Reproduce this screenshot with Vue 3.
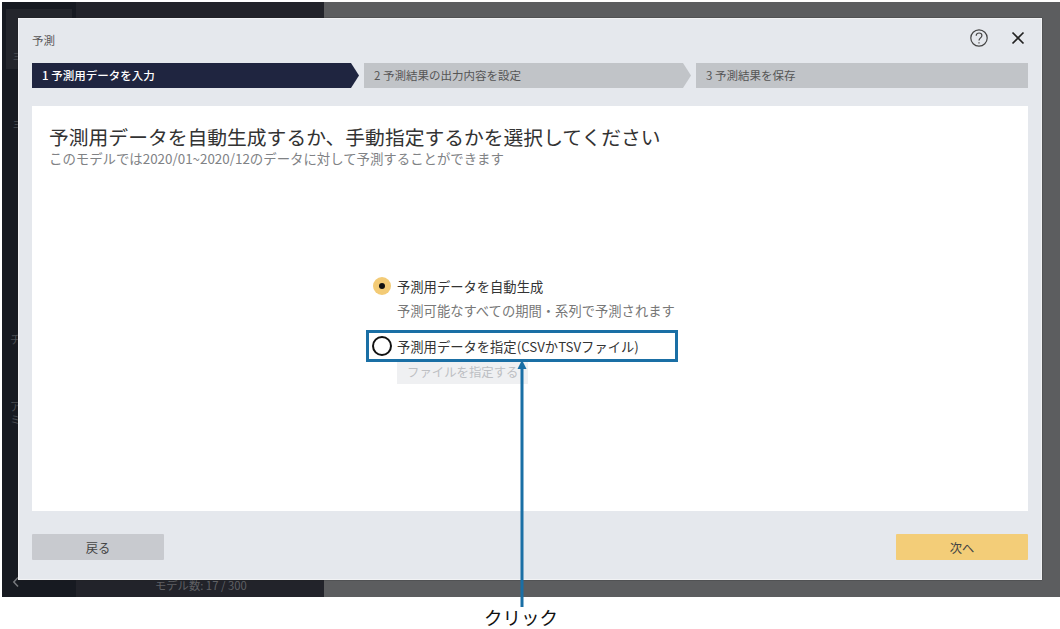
<script setup>
const steps = [
  { label: '1 予測用データを入力', cls: 'active' },
  { label: '2 予測結果の出力内容を設定', cls: 'idle' },
  { label: '3 予測結果を保存', cls: 'last' }
]
</script>

<template>
  <div class="page">
    <div class="shot">
      <aside class="side">
        <div class="side-tile"></div>
        <span class="side-m1">三</span>
        <span class="side-m2">三</span>
        <span class="side-a">チ</span>
        <span class="side-b">ア<br />ミ</span>
        <svg class="side-back" width="8" height="12" viewBox="0 0 8 12" fill="none" stroke="#77797d" stroke-width="1.5">
          <path d="M6 1.5L1.8 6L6 10.5" />
        </svg>
      </aside>
      <div class="panel"><span class="count">モデル数: 17 / 300</span></div>
      <div class="rest"></div>

      <section class="modal">
        <header class="head">
          <span class="title">予測</span>
          <div class="head-icons">
            <svg class="help" width="20" height="20" viewBox="0 0 20 20" fill="none" stroke="#444" stroke-width="1.2">
              <circle cx="10" cy="10" r="8.2" />
              <path d="M7.2 7.8c0-1.7 1.3-2.8 2.9-2.8s2.8 1.1 2.8 2.5c0 2.3-2.9 2.4-2.9 5" />
              <path d="M10 14.3v1.2" />
            </svg>
            <svg width="14" height="14" viewBox="0 0 14 14" fill="none" stroke="#222" stroke-width="1.7">
              <path d="M1.5 1.5l11 11M12.5 1.5l-11 11" />
            </svg>
          </div>
        </header>

        <nav class="steps">
          <div v-for="s in steps" :key="s.label" class="step" :class="s.cls">{{ s.label }}</div>
        </nav>

        <main class="card">
          <h1>予測用データを自動生成するか、手動指定するかを選択してください</h1>
          <p class="sub">このモデルでは2020/01~2020/12のデータに対して予測することができます</p>

          <div class="options">
            <div class="opt">
              <span class="radio on"><i></i></span>
              <span>予測用データを自動生成</span>
            </div>
            <p class="hint">予測可能なすべての期間・系列で予測されます</p>
            <div class="opt second">
              <span class="radio off"></span>
              <span>予測用データを指定(CSVかTSVファイル)</span>
            </div>
            <div class="file">ファイルを指定する</div>
          </div>
        </main>

        <footer class="foot">
          <button class="btn back">戻る</button>
          <button class="btn next">次へ</button>
        </footer>
      </section>

      <div class="callout"></div>
      <div class="arrow">
        <svg width="12" height="247" viewBox="0 0 12 247">
          <path d="M6 0L10.5 9H1.5Z" fill="#1a6fa5" />
          <rect x="4.5" y="7" width="3" height="240" fill="#1a6fa5" />
        </svg>
      </div>
    </div>
    <div class="click">クリック</div>
  </div>
</template>

<style>
html, body { margin: 0; background: #fff; }
</style>

<style scoped>
.page {
  width: 1060px;
  height: 629px;
  position: relative;
  overflow: hidden;
  background: #fff;
  font-family: "Noto Sans CJK JP", "Noto Sans", sans-serif;
  padding: 2px 0 0 2px;
  box-sizing: border-box;
}
.shot {
  position: relative;
  display: flex;
  height: 595px;
}
.side {
  width: 74px;
  background: #171a21;
  position: relative;
  color: #4c4e53;
  font-size: 11px;
}
.side-tile {
  position: absolute;
  left: 4px;
  top: 7px;
  width: 66px;
  height: 60px;
  background: #24262c;
}
.side-m1, .side-m2 { position: absolute; left: 11px; font-size: 9px; line-height: 10px; }
.side-m1 { top: 50px; }
.side-m2 { top: 118px; }
.side-a { position: absolute; left: 8px; top: 329px; }
.side-b { position: absolute; left: 8px; top: 398px; line-height: 13px; }
.side-back { position: absolute; left: 10px; top: 574px; }
.panel {
  width: 248px;
  background: #22232a;
  position: relative;
}
.count {
  position: absolute;
  left: 79px;
  top: 576px;
  font-size: 11.3px;
  line-height: 14px;
  color: #5f6064;
  white-space: nowrap;
}
.rest { flex: 1; background: #5c5d5f; }

.modal {
  position: absolute;
  left: 16px;
  top: 16px;
  width: 1024px;
  height: 562px;
  box-sizing: border-box;
  background: #e5e8ed;
  border: 1px solid #f1f2f4;
  box-shadow: 0 0 1px #222;
  padding: 0 13px;
  display: flex;
  flex-direction: column;
}
.head {
  height: 44px;
  display: flex;
  align-items: center;
  justify-content: space-between;
}
.title {
  font-size: 11.5px;
  color: #555;
  margin-top: -3px;
}
.head-icons {
  display: flex;
  align-items: center;
  gap: 22px;
  margin-right: 3px;
  margin-top: -6px;
}

.steps {
  display: flex;
  height: 25px;
  gap: 5px;
}
.step {
  font-size: 11.5px;
  line-height: 25px;
  padding-left: 10px;
  box-sizing: border-box;
  height: 25px;
  width: 327px;
  clip-path: polygon(0 0, calc(100% - 8px) 0, 100% 50%, calc(100% - 8px) 100%, 0 100%);
}
.step.active { background: #1f2540; color: #fff; font-weight: 500; }
.step.idle { background: #c1c4c8; color: #555; }
.step.last { background: #c1c4c8; color: #555; width: 332px; clip-path: none; }

.card {
  margin-top: 18px;
  height: 405px;
  background: #fff;
  padding: 19px 17px 0;
  box-sizing: border-box;
}
h1 {
  margin: 0;
  font-size: 19.8px;
  font-weight: 400;
  line-height: 24px;
  color: #333;
  white-space: nowrap;
}
.sub {
  margin: 1px 0 0;
  font-size: 13.4px;
  line-height: 16px;
  color: #808285;
  white-space: nowrap;
}
.options {
  margin: 110px 0 0 324px;
  font-size: 13.3px;
  color: #333;
}
.opt {
  display: flex;
  align-items: center;
  gap: 6px;
  height: 20px;
  white-space: nowrap;
}
.radio {
  width: 18px;
  height: 18px;
  border-radius: 50%;
  box-sizing: border-box;
  display: flex;
  align-items: center;
  justify-content: center;
  flex: none;
}
.radio.on { background: #f3cb76; }
.radio.on i { width: 6px; height: 6px; border-radius: 50%; background: #111; }
.radio.off { border: 2px solid #111; background: #fff; width: 20px; height: 20px; margin-right: -1px; margin-left: -1px; }
.hint {
  margin: 6px 0 0 24px;
  line-height: 18px;
  color: #777;
  white-space: nowrap;
}
.second { margin-top: 16px; }
.file {
  margin: 5px 0 0 24px;
  width: 131px;
  height: 23px;
  line-height: 23px;
  padding-left: 10px;
  box-sizing: border-box;
  background: #eff0f2;
  color: #bdbfc3;
  font-size: 12.4px;
  white-space: nowrap;
}

.foot {
  margin-top: 23px;
  display: flex;
  justify-content: space-between;
}
.btn {
  width: 132px;
  height: 26px;
  border: none;
  border-radius: 1px;
  font-family: inherit;
  font-size: 12.3px;
  color: #444;
  padding: 1px 0 0;
}
.back { background: #c8cacf; }
.next { background: #f3cd78; }

.callout {
  position: absolute;
  left: 364px;
  top: 328px;
  width: 312px;
  height: 32px;
  box-sizing: border-box;
  border: 3px solid #1a6fa5;
}
.arrow {
  position: absolute;
  left: 514px;
  top: 358px;
  width: 12px;
  height: 247px;
  line-height: 0;
}
.click {
  position: absolute;
  left: 484px;
  top: 606px;
  font-size: 18.5px;
  line-height: 23px;
  color: #111;
  white-space: nowrap;
}
</style>
